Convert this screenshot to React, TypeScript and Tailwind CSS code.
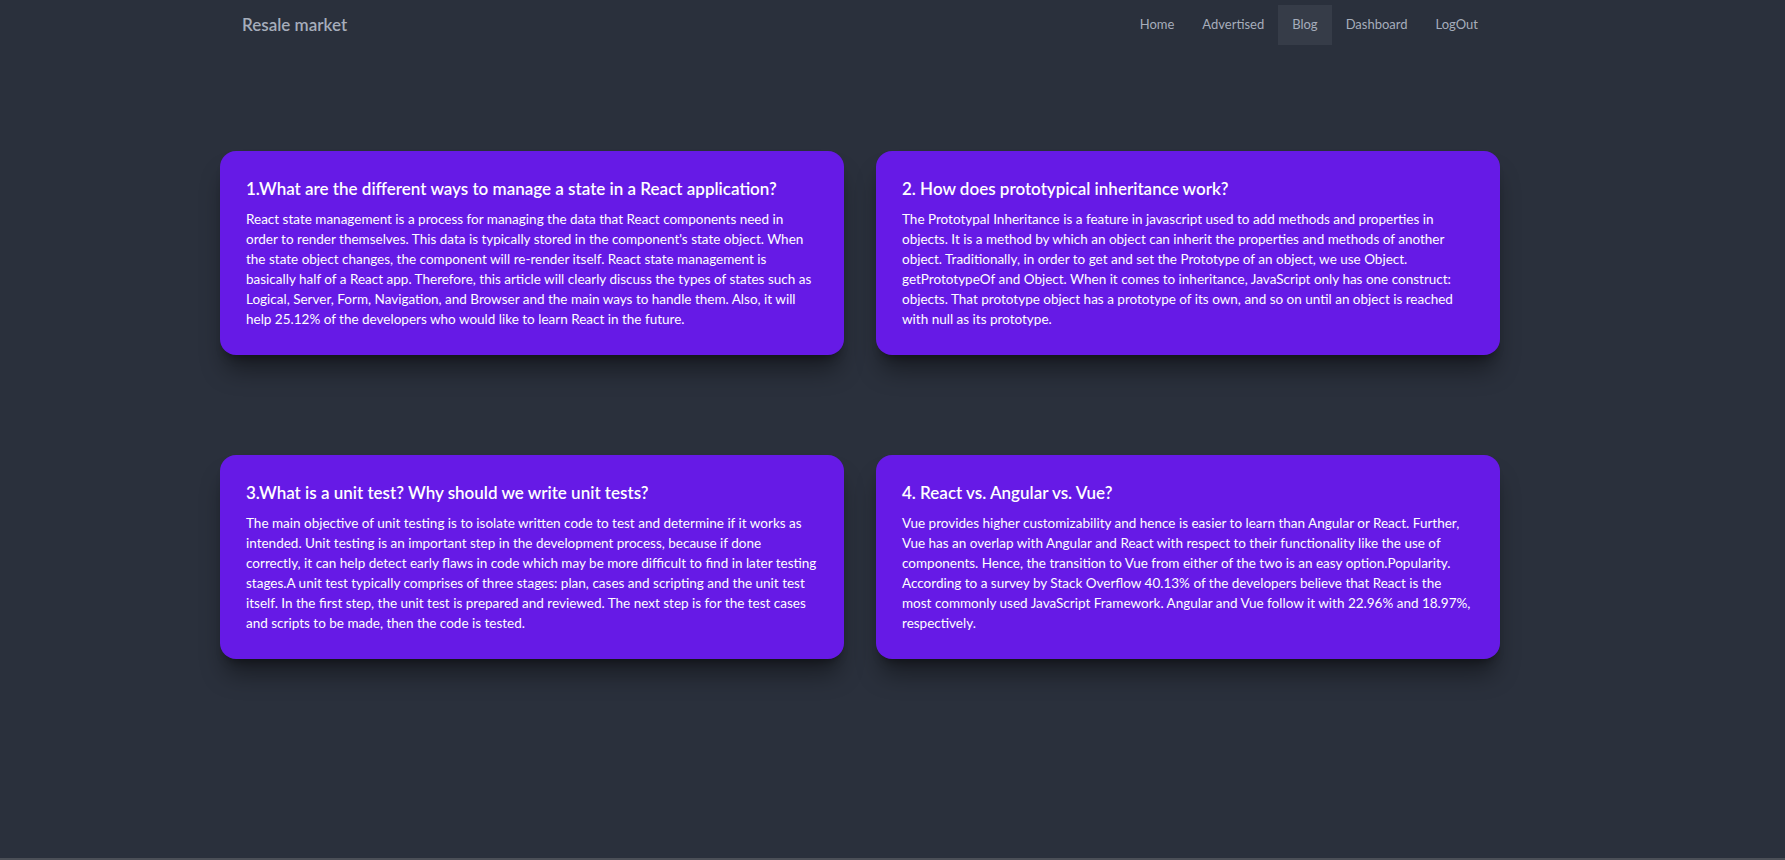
const links = ['Home', 'Advertised', 'Blog', 'Dashboard', 'LogOut'];

const posts = [
  {
    title: '1.What are the different ways to manage a state in a React application?',
    body: "React state management is a process for managing the data that React components need in order to render themselves. This data is typically stored in the component's state object. When the state object changes, the component will re-render itself. React state management is basically half of a React app. Therefore, this article will clearly discuss the types of states such as Logical, Server, Form, Navigation, and Browser and the main ways to handle them. Also, it will help 25.12% of the developers who would like to learn React in the future.",
  },
  {
    title: '2. How does prototypical inheritance work?',
    body: 'The Prototypal Inheritance is a feature in javascript used to add methods and properties in objects. It is a method by which an object can inherit the properties and methods of another object. Traditionally, in order to get and set the Prototype of an object, we use Object. getPrototypeOf and Object. When it comes to inheritance, JavaScript only has one construct: objects. That prototype object has a prototype of its own, and so on until an object is reached with null as its prototype.',
  },
  {
    title: '3.What is a unit test? Why should we write unit tests?',
    body: 'The main objective of unit testing is to isolate written code to test and determine if it works as intended. Unit testing is an important step in the development process, because if done correctly, it can help detect early flaws in code which may be more difficult to find in later testing stages.A unit test typically comprises of three stages: plan, cases and scripting and the unit test itself. In the first step, the unit test is prepared and reviewed. The next step is for the test cases and scripts to be made, then the code is tested.',
  },
  {
    title: '4. React vs. Angular vs. Vue?',
    body: 'Vue provides higher customizability and hence is easier to learn than Angular or React. Further, Vue has an overlap with Angular and React with respect to their functionality like the use of components. Hence, the transition to Vue from either of the two is an easy option.Popularity. According to a survey by Stack Overflow 40.13% of the developers believe that React is the most commonly used JavaScript Framework. Angular and Vue follow it with 22.96% and 18.97%, respectively.',
  },
];

const App = () => {
  return (
    <div className="min-h-[858px] bg-[#2a303c] font-['Lato',sans-serif] text-[#a6adbb]">
      {/* Navbar */}
      <div className="pl-[220px]">
        <nav className="flex h-[50px] w-[1280px] items-center justify-between pr-2">
          <span className="pl-[22px] text-[17px] font-semibold">Resale market</span>
          <ul className="flex items-center">
            {links.map((l) => (
              <li
                key={l}
                className={`flex h-10 items-center px-[14px] text-[13px] ${l === 'Blog' ? 'bg-[#363c48]' : ''}`}
              >
                {l}
              </li>
            ))}
          </ul>
        </nav>
      </div>

      {/* Blog cards */}
      <div className="pl-[220px] pt-[101px]">
        <div className="grid w-[1280px] grid-cols-2 gap-x-8 gap-y-[100px]">
          {posts.map((p) => (
            <div key={p.title} className="rounded-2xl bg-[#661ae6] p-[26px] text-white shadow-xl shadow-black/40">
              <h2 className="mb-2 text-[17px] font-semibold leading-6">{p.title}</h2>
              <p className="text-[13.5px] leading-5">{p.body}</p>
            </div>
          ))}
        </div>
      </div>
      <div className="h-[200px]" />
      <div className="fixed bottom-0 left-0 h-[2px] w-full bg-[#4b4f57]" />
    </div>
  );
};

export default App;
